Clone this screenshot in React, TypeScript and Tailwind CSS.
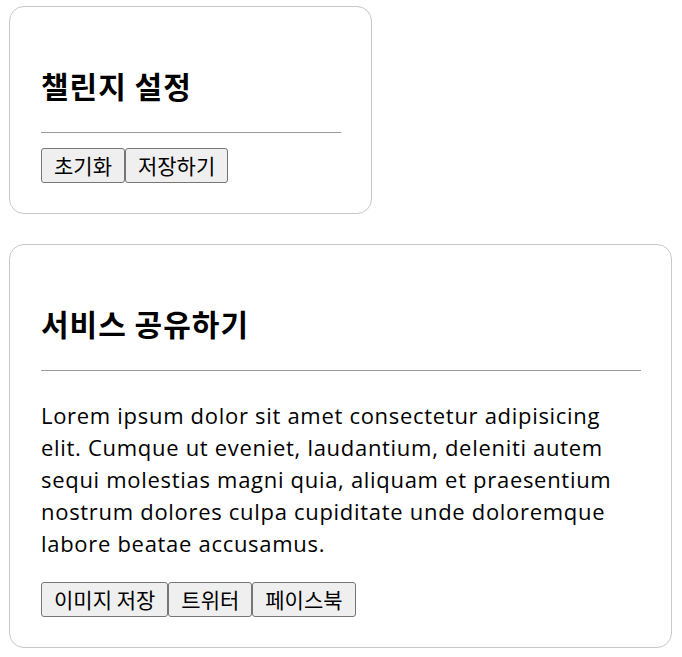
import React from "react";

const ko = "font-['Noto_Sans_CJK_KR',sans-serif]";

function Btn({ children }: { children: React.ReactNode }) {
    return (
        <button
            type="button"
            className="h-[35px] px-[12px] bg-[#efefef] border border-[#767676] rounded-[3px] text-[21px] leading-none text-black hover:bg-[#e5e5e5]"
        >
            {children}
        </button>
    );
}

function Card({ title, width, children }: { title: string; width: string; children: React.ReactNode }) {
    return (
        <section className={`${width} border border-[#c8c8c8] rounded-[15px] pt-[30px] pb-[30px] pl-[31px] pr-[30px] bg-white`}>
            <h1 className="mt-[28px] text-[30px] leading-[40px] tracking-[1px] font-bold text-black">{title}</h1>
            <hr className="mt-[27px] border-0 border-t border-[#9a9a9a]" />
            {children}
        </section>
    );
}

export default function App() {
    return (
        <div className={`${ko} min-h-screen bg-white pt-[6px] pl-[9px] flex flex-col gap-[30px]`}>
            <Card title="챌린지 설정" width="w-[363px]">
                <div className="flex mt-[15px]">
                    <Btn>초기화</Btn>
                    <Btn>저장하기</Btn>
                </div>
            </Card>

            <Card title="서비스 공유하기" width="w-[663px]">
                <p className="mt-[28px] text-[22px] leading-[32px] tracking-[0.7px] text-black font-['Open_Sans','Noto_Sans_CJK_KR',sans-serif]">
                    Lorem ipsum dolor sit amet consectetur adipisicing
                    <br />
                    elit. Cumque ut eveniet, laudantium, deleniti autem
                    <br />
                    sequi molestias magni quia, aliquam et praesentium
                    <br />
                    nostrum dolores culpa cupiditate unde doloremque
                    <br />
                    labore beatae accusamus.
                </p>
                <div className="flex mt-[23px]">
                    <Btn>이미지 저장</Btn>
                    <Btn>트위터</Btn>
                    <Btn>페이스북</Btn>
                </div>
            </Card>
        </div>
    );
}
